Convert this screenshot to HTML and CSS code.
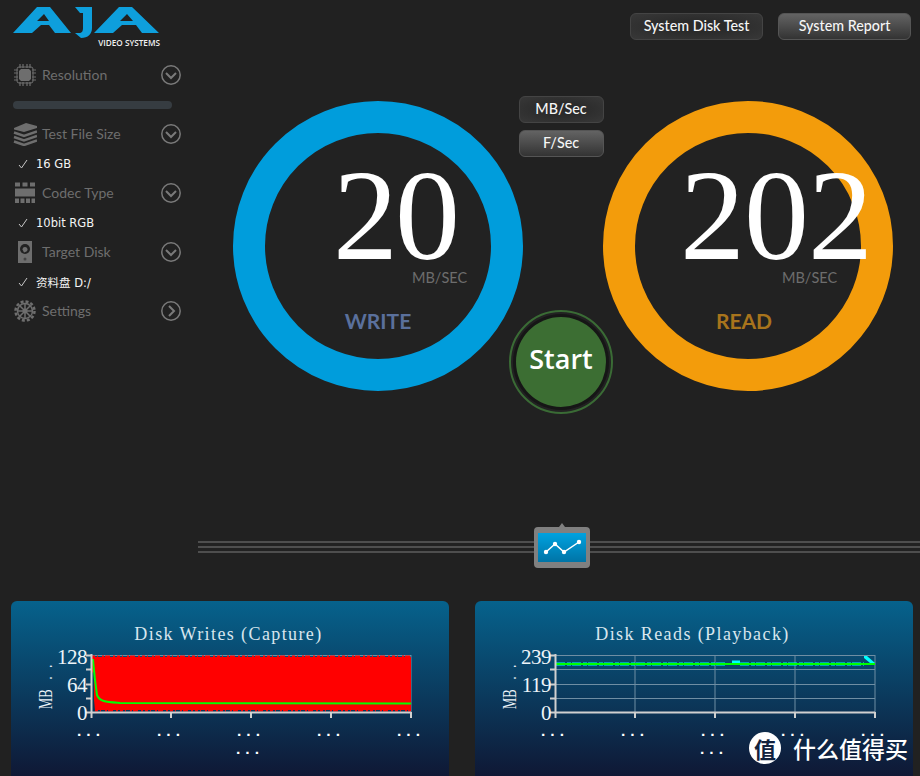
FILE: index.html
```html
<!DOCTYPE html>
<html lang="en">
<head>
    <meta charset="UTF-8">
    <meta name="viewport" content="width=device-width, initial-scale=1.0">
    <title>AJA System Test</title>
    <link rel="stylesheet" href="styles.css">
</head>
<body>
    <div class="top">
        <aside class="sidebar">
            <div class="logo">
                <svg class="logo-mark" viewBox="13 5 148 34" width="148" height="34">
                    <path d="M13 33L37 7H50L71 33H55L49 25H41L32 33ZM44 14L37 21H49Z" fill-rule="evenodd"/>
                    <path d="M75 7H92V28C92 34 88 38 81 38L75 33H79C82 33 83 31 83 28V13H80Z"/>
                    <path d="M94 33L119 7H132L159 33H142L136 25H122L113 33ZM127 14L120 21H133Z" fill-rule="evenodd"/>
                </svg>
                <div class="logo-text">VIDEO SYSTEMS</div>
            </div>

            <div class="menu-row">
                <svg class="menu-icon" viewBox="0 0 24 24" width="24" height="24">
                    <path d="M7 1v4M10 1v4M14 1v4M17 1v4M7 19v4M10 19v4M14 19v4M17 19v4M1 7h4M1 10h4M1 14h4M1 17h4M19 7h4M19 10h4M19 14h4M19 17h4" stroke="#6e6e6e" stroke-width="1.2"/>
                    <rect x="4" y="4" width="16" height="16" rx="2" fill="none" stroke="#6e6e6e" stroke-width="1"/>
                    <path d="M8 6H16L18 8V16L16 18H8L6 16V8Z" fill="#6e6e6e"/>
                </svg>
                <span class="menu-label">Resolution</span>
                <svg class="menu-toggle" viewBox="0 0 20 20" width="20" height="20">
                    <circle cx="10" cy="10" r="9.2"/>
                    <path d="M5 8l5 5 5-5"/>
                </svg>
            </div>
            <div class="menu-value"><div class="progress"></div></div>

            <div class="menu-row">
                <svg class="menu-icon" viewBox="0 0 24 24" width="24" height="24">
                    <path d="M1 6L13 1 24 4V6L11 10 1 7.500Z" fill="#6e6e6e"/>
                    <path d="M1 10.500L11 14 24 9.500M1 15L11 18.500 24 14M1 19.500L11 23 24 18.500" fill="none" stroke="#6e6e6e" stroke-width="2.500"/>
                </svg>
                <span class="menu-label">Test File Size</span>
                <svg class="menu-toggle" viewBox="0 0 20 20" width="20" height="20">
                    <circle cx="10" cy="10" r="9.2"/>
                    <path d="M5 8l5 5 5-5"/>
                </svg>
            </div>
            <div class="menu-value">
                <svg class="check" viewBox="0 0 10 10" width="10" height="10"><path d="M1 6l2.5 3L9 1"/></svg>
                <span>16 GB</span>
            </div>

            <div class="menu-row">
                <svg class="menu-icon" viewBox="0 0 24 24" width="24" height="24">
                    <path d="M2 1.5h5v4H2zM9.5 1.5h5v4h-5zM17 1.5h5v4h-5zM2 7.5h20v8H2zM2 17.5h4v4.500H2zM7.500 17.500h4v4.500h-4zM13 17.500h4v4.500h-4zM18.500 17.500h3.500v4.500h-3.500z" fill="#6e6e6e"/>
                </svg>
                <span class="menu-label">Codec Type</span>
                <svg class="menu-toggle" viewBox="0 0 20 20" width="20" height="20">
                    <circle cx="10" cy="10" r="9.2"/>
                    <path d="M5 8l5 5 5-5"/>
                </svg>
            </div>
            <div class="menu-value">
                <svg class="check" viewBox="0 0 10 10" width="10" height="10"><path d="M1 6l2.5 3L9 1"/></svg>
                <span>10bit RGB</span>
            </div>

            <div class="menu-row">
                <svg class="menu-icon" viewBox="0 0 24 24" width="24" height="24">
                    <rect x="5" y="1" width="14" height="22" fill="#6e6e6e"/>
                    <circle cx="12" cy="9" r="5" fill="#222"/>
                    <path d="M9.500 9.500a2.500 2.500 0 1 1 4 2l-2.500 1" fill="#6e6e6e"/>
                    <circle cx="12" cy="19" r="1.500" fill="#444"/>
                </svg>
                <span class="menu-label">Target Disk</span>
                <svg class="menu-toggle" viewBox="0 0 20 20" width="20" height="20">
                    <circle cx="10" cy="10" r="9.2"/>
                    <path d="M5 8l5 5 5-5"/>
                </svg>
            </div>
            <div class="menu-value">
                <svg class="check" viewBox="0 0 10 10" width="10" height="10"><path d="M1 6l2.5 3L9 1"/></svg>
                <span>资料盘 D:/</span>
            </div>

            <div class="menu-row">
                <svg class="menu-icon" viewBox="0 0 24 24" width="24" height="24">
                    <circle cx="12" cy="12" r="9.500" fill="none" stroke="#6e6e6e" stroke-width="2.500" stroke-dasharray="3 2"/>
                    <circle cx="12" cy="12" r="7.500" fill="none" stroke="#6e6e6e" stroke-width="1.500"/>
                    <circle cx="12" cy="12" r="2.500" fill="#6e6e6e"/>
                    <path d="M12 4v16M4 12h16M6.500 6.500l11 11M17.500 6.500l-11 11" stroke="#6e6e6e" stroke-width="1.500"/>
                </svg>
                <span class="menu-label">Settings</span>
                <svg class="menu-toggle" viewBox="0 0 20 20" width="20" height="20">
                    <circle cx="10" cy="10" r="9.2"/>
                    <path d="M8 5l5 5-5 5"/>
                </svg>
            </div>
        </aside>

        <main class="main">
            <div class="header-buttons">
                <button class="btn">System Disk Test</button>
                <button class="btn btn-on">System Report</button>
            </div>

            <div class="gauges">
                <div class="gauge gauge-write">
                    <div class="gauge-value">20</div>
                    <div class="gauge-unit">MB/SEC</div>
                    <div class="gauge-label">WRITE</div>
                </div>

                <div class="controls">
                    <button class="btn btn-unit">MB/Sec</button>
                    <button class="btn btn-unit btn-on">F/Sec</button>
                    <div class="start-ring">
                        <div class="start">Start</div>
                    </div>
                </div>

                <div class="gauge gauge-read">
                    <div class="gauge-value">202</div>
                    <div class="gauge-unit">MB/SEC</div>
                    <div class="gauge-label">READ</div>
                </div>
            </div>
        </main>
    </div>

    <div class="divider">
        <div class="rule"></div>
        <svg class="graph-toggle" viewBox="0 0 56 45" width="56" height="45">
            <path d="M4 4H25L28 0 31 4H52Q56 4 56 8V41Q56 45 52 45H4Q0 45 0 41V8Q0 4 4 4Z" fill="#808080"/>
            <defs>
                <linearGradient id="screen" x1="0" y1="0" x2="0" y2="1">
                    <stop offset="0" stop-color="#00a2e0"/>
                    <stop offset="1" stop-color="#0074a6"/>
                </linearGradient>
            </defs>
            <rect x="4" y="10" width="48" height="29" fill="url(#screen)"/>
            <path d="M12 29L21 21 30 29 45 19" fill="none" stroke="#fff" stroke-width="1.500"/>
            <circle cx="12" cy="29" r="2.200" fill="#fff"/>
            <circle cx="21" cy="21" r="2.200" fill="#fff"/>
            <circle cx="30" cy="29" r="2.200" fill="#fff"/>
            <circle cx="45" cy="19" r="2.200" fill="#fff"/>
        </svg>
        <div class="rule"></div>
    </div>

    <section class="charts">
        <div class="chart-card">
            <svg class="chart" viewBox="11 601 438 190" width="438" height="190">
                <text class="chart-title" x="228.500" y="640">Disk Writes (Capture)</text>
                <path class="grid" d="M91 655.500H411M411 655V712"/>
                <path d="M91 657H411V710H95L94 700V672L91 673Z" fill="#f00"/>
                <path d="M92 656.500H411" class="jag"/>
                <path d="M95 710.500H411" class="jag"/>
                <path d="M91 660H93L95 680 97 695C100 702 106 702 120 703L411 703.500" fill="none" stroke="#0f0" stroke-width="2"/>
                <path class="axis" d="M91.500 654V718M86 655.500H91M86 669.500H91M86 684.500H91M86 698.500H91M86 712.500H411M171 712V718M251 712V718M331 712V718M411 712V718"/>
                <text class="y-label" x="87" y="664">128</text>
                <text class="y-label" x="87" y="692">64</text>
                <text class="y-label" x="87" y="720">0</text>
                <text class="y-title" transform="translate(52 709) rotate(-90) scale(.7 1)">MB<tspan class="y-dots" dx="14">..</tspan></text>
                <text class="x-label" x="88.500" y="736">...</text>
                <text class="x-label" x="168.500" y="736">...</text>
                <text class="x-label" x="248.500" y="736">...</text>
                <text class="x-label" x="328.500" y="736">...</text>
                <text class="x-label" x="408.500" y="736">...</text>
                <text class="x-label" x="247.500" y="754">...</text>
            </svg>
        </div>

        <div class="chart-card">
            <svg class="chart" viewBox="11 601 438 190" width="438" height="190">
                <text class="chart-title" x="228.500" y="640">Disk Reads (Playback)</text>
                <path class="grid" d="M91 655.500H411M91 669.500H411M91 684.500H411M91 698.500H411M171 655V712M251 655V712M331 655V712M411 655V712"/>
                <path d="M92 664H263M276 664H400" stroke="#0ff" stroke-width="3" stroke-dasharray="9 2 4 1"/>
                <path d="M268 660.500H276V664H268Z" fill="#0ff"/>
                <path d="M400 656H403L411 663H406L400 658Z" fill="#0ff"/>
                <path d="M91 664H411" stroke="#0f0" stroke-width="2"/>
                <path class="axis" d="M91.500 654V718M86 655.500H91M86 669.500H91M86 684.500H91M86 698.500H91M86 712.500H411M171 712V718M251 712V718M331 712V718M411 712V718"/>
                <text class="y-label" x="87" y="664">239</text>
                <text class="y-label" x="87" y="692">119</text>
                <text class="y-label" x="87" y="720">0</text>
                <text class="y-title" transform="translate(52 709) rotate(-90) scale(.7 1)">MB<tspan class="y-dots" dx="14">..</tspan></text>
                <text class="x-label" x="88.500" y="736">...</text>
                <text class="x-label" x="168.500" y="736">...</text>
                <text class="x-label" x="248.500" y="736">...</text>
                <text class="x-label" x="328.500" y="736">...</text>
                <text class="x-label" x="408.500" y="736">...</text>
                <text class="x-label" x="247.500" y="754">...</text>
            </svg>
        </div>
    </section>

    <div class="watermark">
        <span class="watermark-badge">值</span>
        <span class="watermark-text">什么值得买</span>
    </div>
</body>
</html>
```
FILE: styles.css
```css
html, body {
    margin: 0;
    padding: 0;
}
body {
    position: relative;
    width: 920px;
    height: 776px;
    overflow: hidden;
    background: #212121;
    font-family: 'Lato', 'Liberation Sans', sans-serif;
}
.top {
    display: flex;
    height: 523px;
}

/* left menu */
.sidebar {
    width: 198px;
    flex-shrink: 0;
    box-sizing: border-box;
    padding-left: 13px;
}
.logo {
    width: 147px;
    height: 60px;
    box-sizing: border-box;
    padding-top: 5px;
}
.logo-mark {
    display: block;
    fill: #0e9fdc;
}
.logo-text {
    color: #f0f0f0;
    font-family: 'Open Sans', sans-serif;
    font-size: 8.2px;
    font-weight: 600;
    line-height: 8px;
    text-align: right;
    white-space: nowrap;
}
.menu-row {
    display: flex;
    align-items: center;
    width: 168px;
    height: 30px;
}
.menu-icon {
    flex-shrink: 0;
}
.menu-label {
    margin-left: 5px;
    padding-bottom: 2px;
    color: #6e6e6e;
    font-size: 14px;
}
.menu-toggle {
    margin-left: auto;
    fill: none;
    stroke: #7a7a7a;
    stroke-width: 1.5;
}
.menu-toggle path {
    stroke-width: 2;
}
.menu-value {
    display: flex;
    align-items: center;
    height: 29px;
    color: #f4f4f4;
    font-family: 'DejaVu Sans', 'Noto Sans CJK SC', sans-serif;
    font-size: 11.5px;
}
.progress {
    width: 159px;
    height: 8px;
    border-radius: 4px;
    background: #363c41;
}
.check {
    margin-left: 5px;
    margin-right: 8px;
    fill: none;
    stroke: #c8c8c8;
    stroke-width: 1;
}

/* main area */
.main {
    flex: 1;
}
.header-buttons {
    display: flex;
    justify-content: flex-end;
    gap: 15px;
    padding: 13px 9px 0 0;
}
.btn {
    width: 133px;
    height: 27px;
    padding: 0 0 2px;
    box-sizing: border-box;
    border: 1px solid #444;
    border-radius: 6px;
    background: radial-gradient(ellipse at center, #2a2a2a 30%, #383838 100%);
    color: #f6f6f6;
    font-family: 'Lato', sans-serif;
    font-size: 14.3px;
    font-weight: 500;
}
.btn-on {
    border-color: #555;
    background: linear-gradient(#636363, #333);
}
.btn-unit {
    width: 85px;
}
.gauges {
    display: flex;
    align-items: flex-start;
    padding: 56px 0 0 35px;
}
.gauge {
    display: flex;
    flex-direction: column;
    width: 290px;
    height: 290px;
    margin-top: 5px;
    flex-shrink: 0;
    box-sizing: border-box;
    padding-top: 17px;
    border: 32px solid;
    border-radius: 50%;
    background: #222;
}
.gauge-write {
    border-color: #009ddc;
}
.gauge-read {
    border-color: #f39c0b;
}
.gauge-value {
    color: #fff;
    font-family: 'Liberation Serif', serif;
    font-size: 130px;
    line-height: 130px;
}
.gauge-write .gauge-value {
    margin-left: 68px;
    letter-spacing: -3px;
}
.gauge-read .gauge-value {
    margin-left: 45px;
    letter-spacing: -1px;
}
.gauge-unit {
    margin: -12px 0 0 147px;
    color: #6d6d6d;
    font-size: 14.5px;
    line-height: 20px;
}
.gauge-label {
    margin-top: 20px;
    font-size: 21px;
    font-weight: 700;
    line-height: 26px;
    text-align: center;
}
.gauge-write .gauge-label {
    color: #5a709c;
}
.gauge-read .gauge-label {
    margin-right: 8px;
    color: #a8741c;
}
.controls {
    display: flex;
    flex-direction: column;
    align-items: center;
    width: 76px;
    flex-shrink: 0;
    padding-right: 4px;
    gap: 7px;
}
.start-ring {
    display: flex;
    align-items: center;
    justify-content: center;
    flex-shrink: 0;
    width: 104px;
    height: 104px;
    margin-top: 146px;
    box-sizing: border-box;
    border: 2px solid #3a6b35;
    border-radius: 50%;
    background: #222;
}
.start {
    width: 90px;
    height: 90px;
    border-radius: 50%;
    background: #3c6e33;
    box-shadow: 0 0 0 3px #161616;
    color: #fff;
    font-family: 'Open Sans', sans-serif;
    font-size: 27px;
    font-weight: 600;
    line-height: 84px;
    text-align: center;
}

/* divider with graph toggle */
.divider {
    display: flex;
    align-items: center;
    height: 45px;
    padding-left: 198px;
}
.rule {
    flex: 1;
    height: 8px;
    margin-top: 3px;
    border-top: 2px solid #4e4e4e;
    border-bottom: 2px solid #4e4e4e;
    background: linear-gradient(#4e4e4e, #4e4e4e) center / 100% 2px no-repeat;
}
.graph-toggle {
    flex-shrink: 0;
}
.rule:first-child {
    flex: none;
    width: 336px;
}

/* charts */
.charts {
    display: flex;
    gap: 26px;
    padding: 33px 0 0 11px;
}
.chart-card {
    width: 438px;
    height: 190px;
    border-radius: 6px;
    background: linear-gradient(#06628c, #0f1835 92%);
}
.chart {
    display: block;
}
.chart-title {
    fill: #d8e6ee;
    font-family: 'Liberation Serif', serif;
    font-size: 18px;
    letter-spacing: 1.4px;
    text-anchor: middle;
}
.grid {
    fill: none;
    stroke: #6f8ea3;
    stroke-width: 1;
}
.jag {
    fill: none;
    stroke: #f00;
    stroke-width: 2;
    stroke-dasharray: 3 2 1 4 2 1 5 3 2 2;
}
.axis {
    fill: none;
    stroke: #d0d0d0;
    stroke-width: 2;
}
.y-label {
    fill: #eef4f8;
    font-family: 'Liberation Serif', serif;
    font-size: 21px;
    letter-spacing: -0.5px;
    text-anchor: end;
}
.y-title {
    fill: #eef4f8;
    font-family: 'Liberation Serif', serif;
    font-size: 18px;
}
.y-dots {
    letter-spacing: 12.6px;
}
.x-label {
    fill: #fff;
    font-family: 'Liberation Mono', monospace;
    font-size: 15.5px;
    font-weight: 700;
    text-anchor: middle;
}

/* site watermark, sits over the right chart */
.watermark {
    position: absolute;
    left: 749px;
    top: 732px;
    display: flex;
    align-items: center;
    gap: 12px;
    font-family: 'Noto Sans CJK SC', sans-serif;
}
.watermark-badge {
    width: 32px;
    height: 32px;
    border-radius: 50%;
    background: #fff;
    color: #12233f;
    font-size: 22px;
    font-weight: 700;
    line-height: 32px;
    text-align: center;
}
.watermark-text {
    color: #fff;
    font-size: 23px;
    font-weight: 500;
    line-height: 32px;
}
```
